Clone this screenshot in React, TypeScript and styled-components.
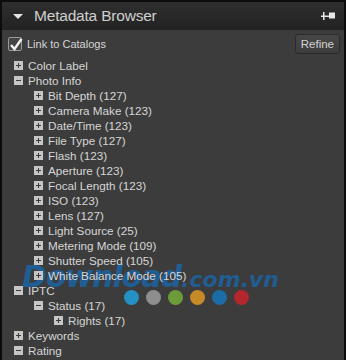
import React from 'react';
import styled, { createGlobalStyle } from 'styled-components';

const GlobalStyle = createGlobalStyle`
  html, body {
    margin: 0;
    padding: 0;
    background: #000;
  }
  * {
    box-sizing: border-box;
  }
`;

const Panel = styled.div`
  position: relative;
  width: 346px;
  height: 360px;
  overflow: hidden;
  background: #3c3c3c;
  border-left: 2px solid #0c0c0c;
  border-right: 2px solid #0c0c0c;
  border-top: 2px solid #0c0c0c;
  font-family: 'Liberation Sans', Arial, sans-serif;
  color: #d6d6d6;
`;

const Header = styled.div`
  display: flex;
  align-items: center;
  height: 28px;
  padding: 0 7px 0 11px;
  background: linear-gradient(#2f2f2f, #222222);
`;

const Caret = styled.span`
  width: 0;
  height: 0;
  border-left: 5px solid transparent;
  border-right: 5px solid transparent;
  border-top: 5px solid #e6e6e6;
  margin-right: 11px;
`;

const Title = styled.h1`
  flex: 1;
  margin: 0;
  font-size: 15.5px;
  font-weight: normal;
  color: #cfcfcf;
  letter-spacing: -0.2px;
`;

const Toolbar = styled.div`
  display: flex;
  align-items: center;
  justify-content: space-between;
  height: 28px;
  padding: 0 4px 0 6px;
`;

const CheckLabel = styled.label`
  display: flex;
  align-items: center;
  gap: 5px;
  font-size: 11px;
`;

const CheckBox = styled.span`
  position: relative;
  width: 14px;
  height: 14px;
  background: #444;
  border: 1px solid #9a9a9a;
  border-radius: 2px;

  svg {
    position: absolute;
    left: 0;
    top: -2px;
  }
`;

const Button = styled.button`
  height: 20px;
  padding: 0 5px;
  font-family: inherit;
  font-size: 11.5px;
  color: #d2d2d2;
  background: linear-gradient(#474747, #3d3d3d);
  border: 1px solid #2a2a2a;
  border-radius: 3px;
`;

const Tree = styled.ul`
  position: relative;
  z-index: 1;
  list-style: none;
  margin: 0;
  padding: 0;
`;

const Row = styled.li<{ $level: number }>`
  display: flex;
  align-items: center;
  gap: 5px;
  height: 15px;
  padding-left: ${({ $level }) => 12 + $level * 20}px;
  font-size: 11.7px;
  white-space: nowrap;
`;

const Toggle = styled.span<{ $open: boolean }>`
  position: relative;
  width: 9px;
  height: 9px;
  flex: none;
  background: #c6c6c6;

  &::before,
  &::after {
    content: '';
    position: absolute;
    background: #3a3a3a;
  }
  &::before {
    left: 2px;
    top: 4px;
    width: 5px;
    height: 1px;
  }
  &::after {
    display: ${({ $open }) => ($open ? 'none' : 'block')};
    left: 4px;
    top: 2px;
    width: 1px;
    height: 5px;
  }
`;

const Watermark = styled.div`
  position: absolute;
  left: 20px;
  top: 257px;
  z-index: 0;
  font-family: 'DejaVu Sans', sans-serif;
  font-weight: bold;
  font-style: italic;
  font-size: 30px;
  letter-spacing: -1px;
  color: rgba(22, 104, 176, 0.75);
  white-space: nowrap;

  small {
    font-size: 22px;
    letter-spacing: 0;
  }
`;

const Dots = styled.div`
  position: absolute;
  left: 122px;
  top: 288px;
  z-index: 2;
  display: flex;
  gap: 7px;
`;

const Dot = styled.span<{ $color: string }>`
  width: 15px;
  height: 15px;
  border-radius: 50%;
  background: ${({ $color }) => $color};
`;

type Node = { label: string; level: number; open?: boolean };

const nodes: Node[] = [
  { label: 'Color Label', level: 0 },
  { label: 'Photo Info', level: 0, open: true },
  { label: 'Bit Depth (127)', level: 1 },
  { label: 'Camera Make (123)', level: 1 },
  { label: 'Date/Time (123)', level: 1 },
  { label: 'File Type (127)', level: 1 },
  { label: 'Flash (123)', level: 1 },
  { label: 'Aperture (123)', level: 1 },
  { label: 'Focal Length (123)', level: 1 },
  { label: 'ISO (123)', level: 1 },
  { label: 'Lens (127)', level: 1 },
  { label: 'Light Source (25)', level: 1 },
  { label: 'Metering Mode (109)', level: 1 },
  { label: 'Shutter Speed (105)', level: 1 },
  { label: 'White Balance Mode (105)', level: 1 },
  { label: 'IPTC', level: 0, open: true },
  { label: 'Status (17)', level: 1, open: true },
  { label: 'Rights (17)', level: 2 },
  { label: 'Keywords', level: 0 },
  { label: 'Rating', level: 0, open: true },
];

const dotColors = ['#2490c4', '#8e8e8e', '#6c9c3a', '#c68a28', '#1c6ca6', '#b3262e'];

export default function App() {
  return (
    <>
      <GlobalStyle />
      <Panel>
        <Header>
          <Caret />
          <Title>Metadata Browser</Title>
          <svg width="16" height="10" viewBox="0 0 16 10">
            <rect x="2" y="1" width="1.5" height="8" fill="#e8e8e8" />
            <rect x="0" y="4.5" width="9" height="1.5" fill="#e8e8e8" />
            <rect x="8" y="1.5" width="6" height="6" fill="#e8e8e8" />
          </svg>
        </Header>
        <Toolbar>
          <CheckLabel>
            <CheckBox>
              <svg width="14" height="16" viewBox="0 0 14 16">
                <path d="M2 9 L5.5 13 L12.5 3" fill="none" stroke="#f2f2f2" strokeWidth="2.4" />
              </svg>
            </CheckBox>
            Link to Catalogs
          </CheckLabel>
          <Button>Refine</Button>
        </Toolbar>
        <Tree>
          {nodes.map((n) => (
            <Row key={n.label} $level={n.level}>
              <Toggle $open={!!n.open} />
              {n.label}
            </Row>
          ))}
        </Tree>
        <Watermark>
          Download<small>.com.vn</small>
        </Watermark>
        <Dots>
          {dotColors.map((c) => (
            <Dot key={c} $color={c} />
          ))}
        </Dots>
      </Panel>
    </>
  );
}
